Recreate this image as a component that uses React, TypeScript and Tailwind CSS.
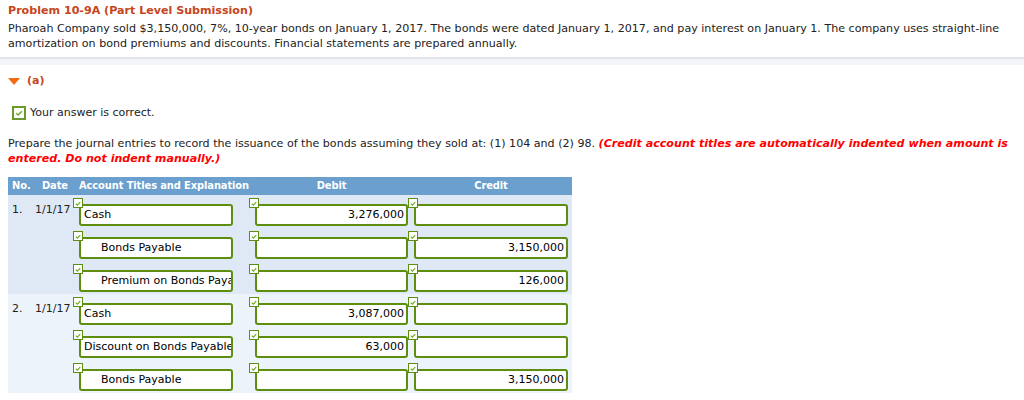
import React from "react";

type Row = {
  account: string;
  indent?: boolean;
  debit?: string;
  credit?: string;
};

type Entry = {
  no: string;
  date: string;
  rows: Row[];
};

const entries: Entry[] = [
  {
    no: "1.",
    date: "1/1/17",
    rows: [
      { account: "Cash", debit: "3,276,000" },
      { account: "Bonds Payable", indent: true, credit: "3,150,000" },
      { account: "Premium on Bonds Payable", indent: true, credit: "126,000" },
    ],
  },
  {
    no: "2.",
    date: "1/1/17",
    rows: [
      { account: "Cash", debit: "3,087,000" },
      { account: "Discount on Bonds Payable", debit: "63,000" },
      { account: "Bonds Payable", indent: true, credit: "3,150,000" },
    ],
  },
];

function Tick({ className }: { className?: string }) {
  return (
    <svg viewBox="0 0 10 10" className={className}>
      <path d="M2.2 5.2 L4.2 7 L7.8 3.2" fill="none" stroke="#6aa81e" strokeWidth="1.4" />
    </svg>
  );
}

function Field({
  value,
  width,
  align = "left",
  indent,
}: {
  value?: string;
  width: string;
  align?: "left" | "right";
  indent?: boolean;
}) {
  return (
    <div className={`relative ${width}`}>
      <div className="absolute -left-[6px] -top-[6px] w-[10px] h-[10px] bg-white border border-[#5e8e10] flex items-center justify-center">
        <Tick className="w-[9px] h-[9px]" />
      </div>
      <div
        className={`h-[22px] bg-white border-2 border-[#5e8e10] rounded-[3px] flex items-center overflow-hidden whitespace-nowrap text-[11px] text-black ${
          align === "right" ? "justify-end pr-[2px]" : indent ? "pl-[20px]" : "pl-[3px]"
        }`}
      >
        {value}
      </div>
    </div>
  );
}

export default function App() {
  return (
    <div
      className="w-[1024px] h-[400px] bg-white text-[#222] overflow-hidden"
      style={{ fontFamily: '"DejaVu Sans", Verdana, sans-serif' }}
    >
      {/* Problem text */}
      <div className="px-2 pt-[3px] pb-[6px] text-[11.1px]">
        <div className="font-bold text-[#c5461c] leading-[15px]">
          Problem 10-9A (Part Level Submission)
        </div>
        <div className="leading-[15px] mt-[3px]">
          Pharoah Company sold $3,150,000, 7%, 10-year bonds on January 1, 2017. The bonds were dated January 1, 2017, and pay interest on January 1. The company uses straight-line amortization on bond premiums and discounts. Financial statements are prepared annually.
        </div>
      </div>
      <div className="h-[8px] bg-[#f3f5f8] border-t-2 border-[#e1e5ea]" />

      {/* Part (a) */}
      <div className="px-2 pt-[8px] flex items-center gap-[7px]">
        <svg viewBox="0 0 12 7" className="w-[12px] h-[7px]">
          <path d="M0 0 H12 L6 7 Z" fill="#f36c10" />
        </svg>
        <span className="text-[11px] font-bold text-[#c5461c]">(a)</span>
      </div>

      <div className="pl-[12px] pt-[15px] flex items-center gap-[4px]">
        <div className="w-[14px] h-[14px] border-2 border-[#6a9a2a] bg-white flex items-center justify-center">
          <Tick className="w-[10px] h-[10px]" />
        </div>
        <span className="text-[11px]">Your answer is correct.</span>
      </div>

      <div className="px-2 pt-[15px] text-[11.1px] leading-[15px]">
        Prepare the journal entries to record the issuance of the bonds assuming they sold at: (1) 104 and (2) 98.{" "}
        <span className="font-bold italic text-[#ff0000]">
          (Credit account titles are automatically indented when amount is entered. Do not indent manually.)
        </span>
      </div>

      {/* Journal table */}
      <div className="ml-2 mt-[11px] w-[564px]">
        <div
          className="h-[18px] bg-[#6b9fcd] text-white text-[11px] font-bold flex items-center tracking-[-0.1px]"
          style={{ fontFamily: '"DejaVu Sans Condensed", "DejaVu Sans", sans-serif' }}
        >
          <span className="pl-[4px] w-[34px]">No.</span>
          <span className="w-[37px]">Date</span>
          <span className="w-[176px]">Account Titles and Explanation</span>
          <span className="w-[153px] text-center">Debit</span>
          <span className="w-[6px]" />
          <span className="w-[154px] text-center">Credit</span>
        </div>

        {entries.map((entry, ei) => (
          <div key={ei} className={ei % 2 === 0 ? "bg-[#dfe9f6]" : "bg-[#edf3fb]"}>
            {entry.rows.map((row, ri) => (
              <div key={ri} className="h-[33px] flex items-start pt-[9px]">
                <span className="w-[27px] pl-[4px] text-[11px] leading-[12px]">
                  {ri === 0 ? entry.no : ""}
                </span>
                <span className="w-[44px] text-[11px] leading-[12px]">
                  {ri === 0 ? entry.date : ""}
                </span>
                <Field value={row.account} indent={row.indent} width="w-[154px]" />
                <div className="w-[22px]" />
                <Field value={row.debit} width="w-[153px]" align="right" />
                <div className="w-[6px]" />
                <Field value={row.credit} width="w-[154px]" align="right" />
              </div>
            ))}
          </div>
        ))}
      </div>
    </div>
  );
}
